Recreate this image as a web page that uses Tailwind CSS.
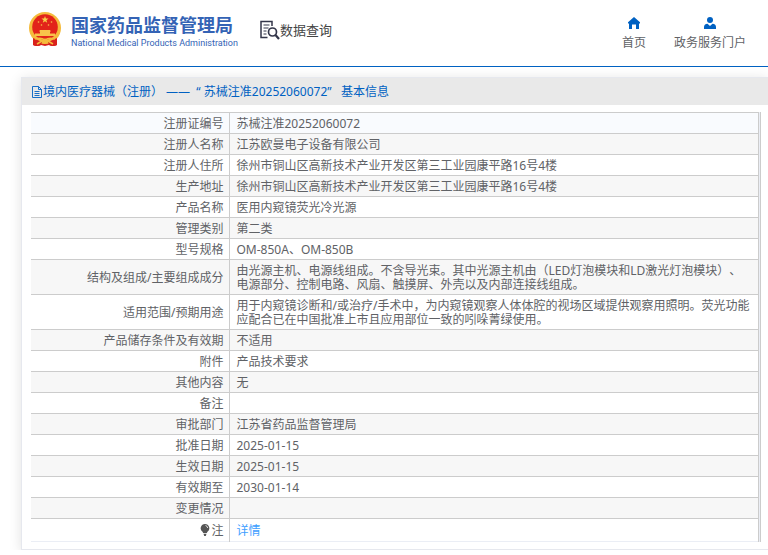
<!DOCTYPE html>
<html lang="zh-CN">

<head>
    <meta charset="UTF-8">
    <meta name="viewport" content="width=device-width, initial-scale=1.0">
    <title>数据查询</title>
    <script src="https://cdn.jsdelivr.net/npm/@tailwindcss/browser@4"></script>
</head>

<body class="bg-white text-[#606266] text-xs font-['Noto_Sans','Noto_Sans_CJK_SC',sans-serif] [text-spacing-trim:space-all]">

    <header class="flex items-start h-[67px] pl-7 pr-[22px] border-b border-[#0061c2]">
        <a href="#" class="flex items-start pt-[11px]">
            <svg class="w-[34px] h-9" viewBox="0 0 34 36">
                <path d="M5 22 L5 34 Q9 36 13 34 L17 35 L21 34 Q25 36 29 34 L29 22 Z" fill="#d9221c" />
                <circle cx="17" cy="17" r="16" fill="#f5bb3c" />
                <path d="M5 27L5 34Q9 36 13 34L14 31zM29 27L29 34Q25 36 21 34L20 31z" fill="#d9221c" />
                <circle cx="17" cy="16" r="12.800" fill="#e2231a" />
                <path d="M17 5 l.9 2.6 h2.7 l-2.2 1.6 .8 2.6 -2.2-1.6 -2.2 1.6 .8-2.6 -2.2-1.6 h2.7z" fill="#f8d24a" />
                <g fill="#f8c24a">
                    <circle cx="10.5" cy="11" r=".8" />
                    <circle cx="13.5" cy="14" r=".8" />
                    <circle cx="20.5" cy="14" r=".8" />
                    <circle cx="23.5" cy="11" r=".8" />
                    <path d="M12 19h10l1 1.500h-1v2h5v2.500H7v-2.500h5v-2h-1z" />
                </g>
                <path d="M7 28 Q13 26 17 29 Q21 26 27 28 M9 33 L14 30 M25 33 L20 30" fill="none" stroke="#f5bb3c" stroke-width="1.5" />
                <circle cx="17" cy="30" r="2.6" fill="#f5bb3c" />
            </svg>
            <span class="flex flex-col pl-[9px] text-[#3463b5]">
                <span class="text-lg leading-6 font-bold pt-0.5 whitespace-nowrap">国家药品监督管理局</span>
                <span class="text-[9px] leading-3 font-['Roboto',sans-serif] whitespace-nowrap">National Medical Products Administration</span>
            </span>
        </a>
        <a href="#" class="flex items-center pt-5 pl-[21px] text-[#444]">
            <svg class="w-[21px] h-5" viewBox="0 0 20 20" fill="none" stroke="#33364a">
                <path d="M12.500 6V1.500H1.500V17.500H8" stroke-width="1.500" />
                <path d="M4 5h6M4 8h5M4 11h3M4 14h3" />
                <circle cx="13" cy="12" r="4" stroke-width="1.700" />
                <path d="M16 15l3.500 4" stroke-width="2.200" />
            </svg>
            <span class="text-[13px] leading-5 whitespace-nowrap">数据查询</span>
        </a>
        <nav class="flex ml-auto pt-[17px] gap-7 leading-4 whitespace-nowrap">
            <a href="#" class="flex flex-col items-center gap-1.5">
                <svg class="w-3 h-3" viewBox="0 0 12 12" fill="#0061c2">
                    <path d="M6 0L12 5.200V6.500H11V12H8V7.500H4V12H1V6.500H0V5.200z" />
                </svg>
                首页
            </a>
            <a href="#" class="flex flex-col items-center gap-1.5">
                <svg class="w-3 h-3" viewBox="0 0 12 12" fill="#0061c2">
                    <circle cx="6" cy="3" r="3" />
                    <path d="M0 12V10Q0 7 3.500 6.700L6 9L8.500 6.700Q12 7 12 10V12z" />
                </svg>
                政务服务门户
            </a>
        </nav>
    </header>

    <main class="pt-2.5 pl-[21px]">
        <section class="border border-r-0 border-[#e6e8ee] shadow-[0_2px_12px_rgba(0,0,0,0.12)] pb-[7px]">
            <h1 class="flex items-center h-[27px] pl-[9px] bg-[#e9e9e9] text-[#0061c2] whitespace-pre">
                <svg class="w-3 h-3" viewBox="0 0 12 12" fill="none" stroke="#0061c2" stroke-width="0.900">
                    <path d="M1.500 .5H7.500L10.500 3.500V11.500H1.500zM7.500 .5V3.500H10.500M3.500 5.500H8.500M3.500 7.500H8.500M3.500 9.500H8.500" />
                </svg>境内医疗器械（注册） ——  “ 苏械注准20252060072”   基本信息</h1>

            <div class="mt-[7px] ml-[9px] mr-[7px] pr-px border-r border-[#ccc] bg-[#ebeef5]">
                <table class="w-full border-collapse leading-[14px] bg-white border-b border-[#ebeef5] [&_th]:w-[198px] [&_th]:text-right [&_th]:font-normal [&_th]:pt-1 [&_th]:pb-0.5 [&_th]:pl-1.5 [&_th]:pr-[5px] [&_td]:pt-1 [&_td]:pb-0.5 [&_td]:pl-[7px] [&_td]:pr-1 [&_th]:border-t [&_td]:border-t [&_th]:border-r [&_td]:border-r [&_th]:border-[#ccc] [&_td]:border-[#ccc]">
                    <tbody>
                        <tr class="h-[21px] bg-[#f9fbfe]"><th scope="row">注册证编号</th><td>苏械注准20252060072</td></tr>
                        <tr class="h-[21px] bg-[#f7f7f7]"><th scope="row">注册人名称</th><td>江苏欧曼电子设备有限公司</td></tr>
                        <tr class="h-[21px]"><th scope="row">注册人住所</th><td>徐州市铜山区高新技术产业开发区第三工业园康平路16号4楼</td></tr>
                        <tr class="h-[21px] bg-[#f7f7f7]"><th scope="row">生产地址</th><td>徐州市铜山区高新技术产业开发区第三工业园康平路16号4楼</td></tr>
                        <tr class="h-[21px]"><th scope="row">产品名称</th><td>医用内窥镜荧光冷光源</td></tr>
                        <tr class="h-[21px] bg-[#f7f7f7]"><th scope="row">管理类别</th><td>第二类</td></tr>
                        <tr class="h-[21px]"><th scope="row">型号规格</th><td>OM-850A、OM-850B</td></tr>
                        <tr class="bg-[#f7f7f7]"><th scope="row">结构及组成/主要组成成分</th><td>由光源主机、电源线组成。不含导光束。其中光源主机由（LED灯泡模块和LD激光灯泡模块）、<br>电源部分、控制电路、风扇、触摸屏、外壳以及内部连接线组成。</td></tr>
                        <tr><th scope="row">适用范围/预期用途</th><td>用于内窥镜诊断和/或治疗/手术中，为内窥镜观察人体体腔的视场区域提供观察用照明。荧光功能应配合已在中国批准上市且应用部位一致的吲哚菁绿使用。</td></tr>
                        <tr class="h-[21px] bg-[#f7f7f7]"><th scope="row">产品储存条件及有效期</th><td>不适用</td></tr>
                        <tr class="h-[21px]"><th scope="row">附件</th><td>产品技术要求</td></tr>
                        <tr class="h-[21px] bg-[#f7f7f7]"><th scope="row">其他内容</th><td>无</td></tr>
                        <tr class="h-[21px]"><th scope="row">备注</th><td></td></tr>
                        <tr class="h-[21px] bg-[#f7f7f7]"><th scope="row">审批部门</th><td>江苏省药品监督管理局</td></tr>
                        <tr class="h-[21px]"><th scope="row">批准日期</th><td>2025-01-15</td></tr>
                        <tr class="h-[21px] bg-[#f7f7f7]"><th scope="row">生效日期</th><td>2025-01-15</td></tr>
                        <tr class="h-[21px]"><th scope="row">有效期至</th><td>2030-01-14</td></tr>
                        <tr class="h-[21px] bg-[#f7f7f7]"><th scope="row">变更情况</th><td></td></tr>
                        <tr class="h-[23px] [&>*]:pt-1.5">
                            <th scope="row">
                                <svg class="inline w-3 h-3 align-[-1px]" viewBox="0 0 12 12" fill="#555">
                                    <path d="M6 0a4.300 4.300 0 0 1 2.500 7.800L7.800 9H4.200L3.500 7.800A4.300 4.300 0 0 1 6 0zM4.500 9.700h3L6.800 12H5.200z" />
                                    <path d="M6.500 1.500Q8.500 2 8.700 4" fill="none" stroke="#fff" stroke-width=".8" />
                                </svg>注</th>
                            <td><a href="#" class="text-[#409eff]">详情</a></td>
                        </tr>
                    </tbody>
                </table>
            </div>
        </section>
    </main>

</body>

</html>
